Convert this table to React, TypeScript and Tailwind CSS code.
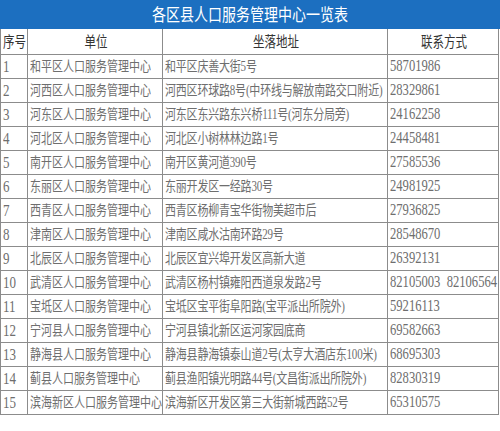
import React from "react";

const rows: [string, string, string, string][] = [
  ["1", "和平区人口服务管理中心", "和平区庆善大街5号", "58701986"],
  ["2", "河西区人口服务管理中心", "河西区环球路8号(中环线与解放南路交口附近)", "28329861"],
  ["3", "河东区人口服务管理中心", "河东区东兴路东兴桥111号(河东分局旁)", "24162258"],
  ["4", "河北区人口服务管理中心", "河北区小树林林边路1号", "24458481"],
  ["5", "南开区人口服务管理中心", "南开区黄河道390号", "27585536"],
  ["6", "东丽区人口服务管理中心", "东丽开发区一经路30号", "24981925"],
  ["7", "西青区人口服务管理中心", "西青区杨柳青宝华街物美超市后", "27936825"],
  ["8", "津南区人口服务管理中心", "津南区咸水沽南环路29号", "28548670"],
  ["9", "北辰区人口服务管理中心", "北辰区宜兴埠开发区高新大道", "26392131"],
  ["10", "武清区人口服务管理中心", "武清区杨村镇雍阳西道泉发路2号", "82105003  82106564"],
  ["11", "宝坻区人口服务管理中心", "宝坻区宝平街阜阳路(宝平派出所院外)", "59216113"],
  ["12", "宁河县人口服务管理中心", "宁河县镇北新区运河家园底商", "69582663"],
  ["13", "静海县人口服务管理中心", "静海县静海镇泰山道2号(太亨大酒店东100米)", "68695303"],
  ["14", "蓟县人口服务管理中心", "蓟县渔阳镇光明路44号(文昌街派出所院外)", "82830319"],
  ["15", "滨海新区人口服务管理中心", "滨海新区开发区第三大街新城西路52号", "65310575"],
];

const cell = "flex items-center overflow-hidden whitespace-nowrap border-r border-b border-[#8c8c8c] pl-[2px]";
const head = "h-[26px] justify-center text-[11.5px] text-[#333] [font-family:'Noto_Sans_CJK_SC',sans-serif]";

function Txt({ children, className = "" }: { children: React.ReactNode; className?: string }) {
  return <span className={`inline-block origin-center scale-y-[1.25] ${className}`}>{children}</span>;
}

export default function App() {
  return (
    <div className="h-[431px] w-[500px] bg-white [font-family:'Liberation_Serif','Noto_Sans_CJK_SC',serif]">
      <div className="flex h-[29px] items-center justify-center bg-[#1c6fc0] text-[14px] text-white [font-family:'Noto_Sans_CJK_SC',sans-serif]">
        <Txt>各区县人口服务管理中心一览表</Txt>
      </div>
      <div className="grid w-[498px] grid-cols-[27px_135px_225px_111px] border-l border-[#8c8c8c] text-[#6e6e6e]">
        <div className={`${cell} h-[26px] text-[11.5px] text-[#333] [font-family:'Noto_Sans_CJK_SC',sans-serif]`}>
          <Txt>序号</Txt>
        </div>
        <div className={`${cell} ${head}`}>
          <Txt>单位</Txt>
        </div>
        <div className={`${cell} ${head}`}>
          <Txt>坐落地址</Txt>
        </div>
        <div className={`${cell} ${head}`}>
          <Txt>联系方式</Txt>
        </div>
        {rows.map(([no, unit, addr, tel]) => (
          <React.Fragment key={no}>
            <div className={`${cell} h-[24px] text-[13px]`}>
              <Txt>{no}</Txt>
            </div>
            <div className={`${cell} h-[24px] text-[11px]`}>
              <Txt>{unit}</Txt>
            </div>
            <div className={`${cell} h-[24px] text-[11px] tracking-[-0.2px]`}>
              <Txt>{addr}</Txt>
            </div>
            <div className={`${cell} h-[24px] text-[12.6px]`}>
              <Txt className="whitespace-pre">{tel}</Txt>
            </div>
          </React.Fragment>
        ))}
      </div>
    </div>
  );
}
